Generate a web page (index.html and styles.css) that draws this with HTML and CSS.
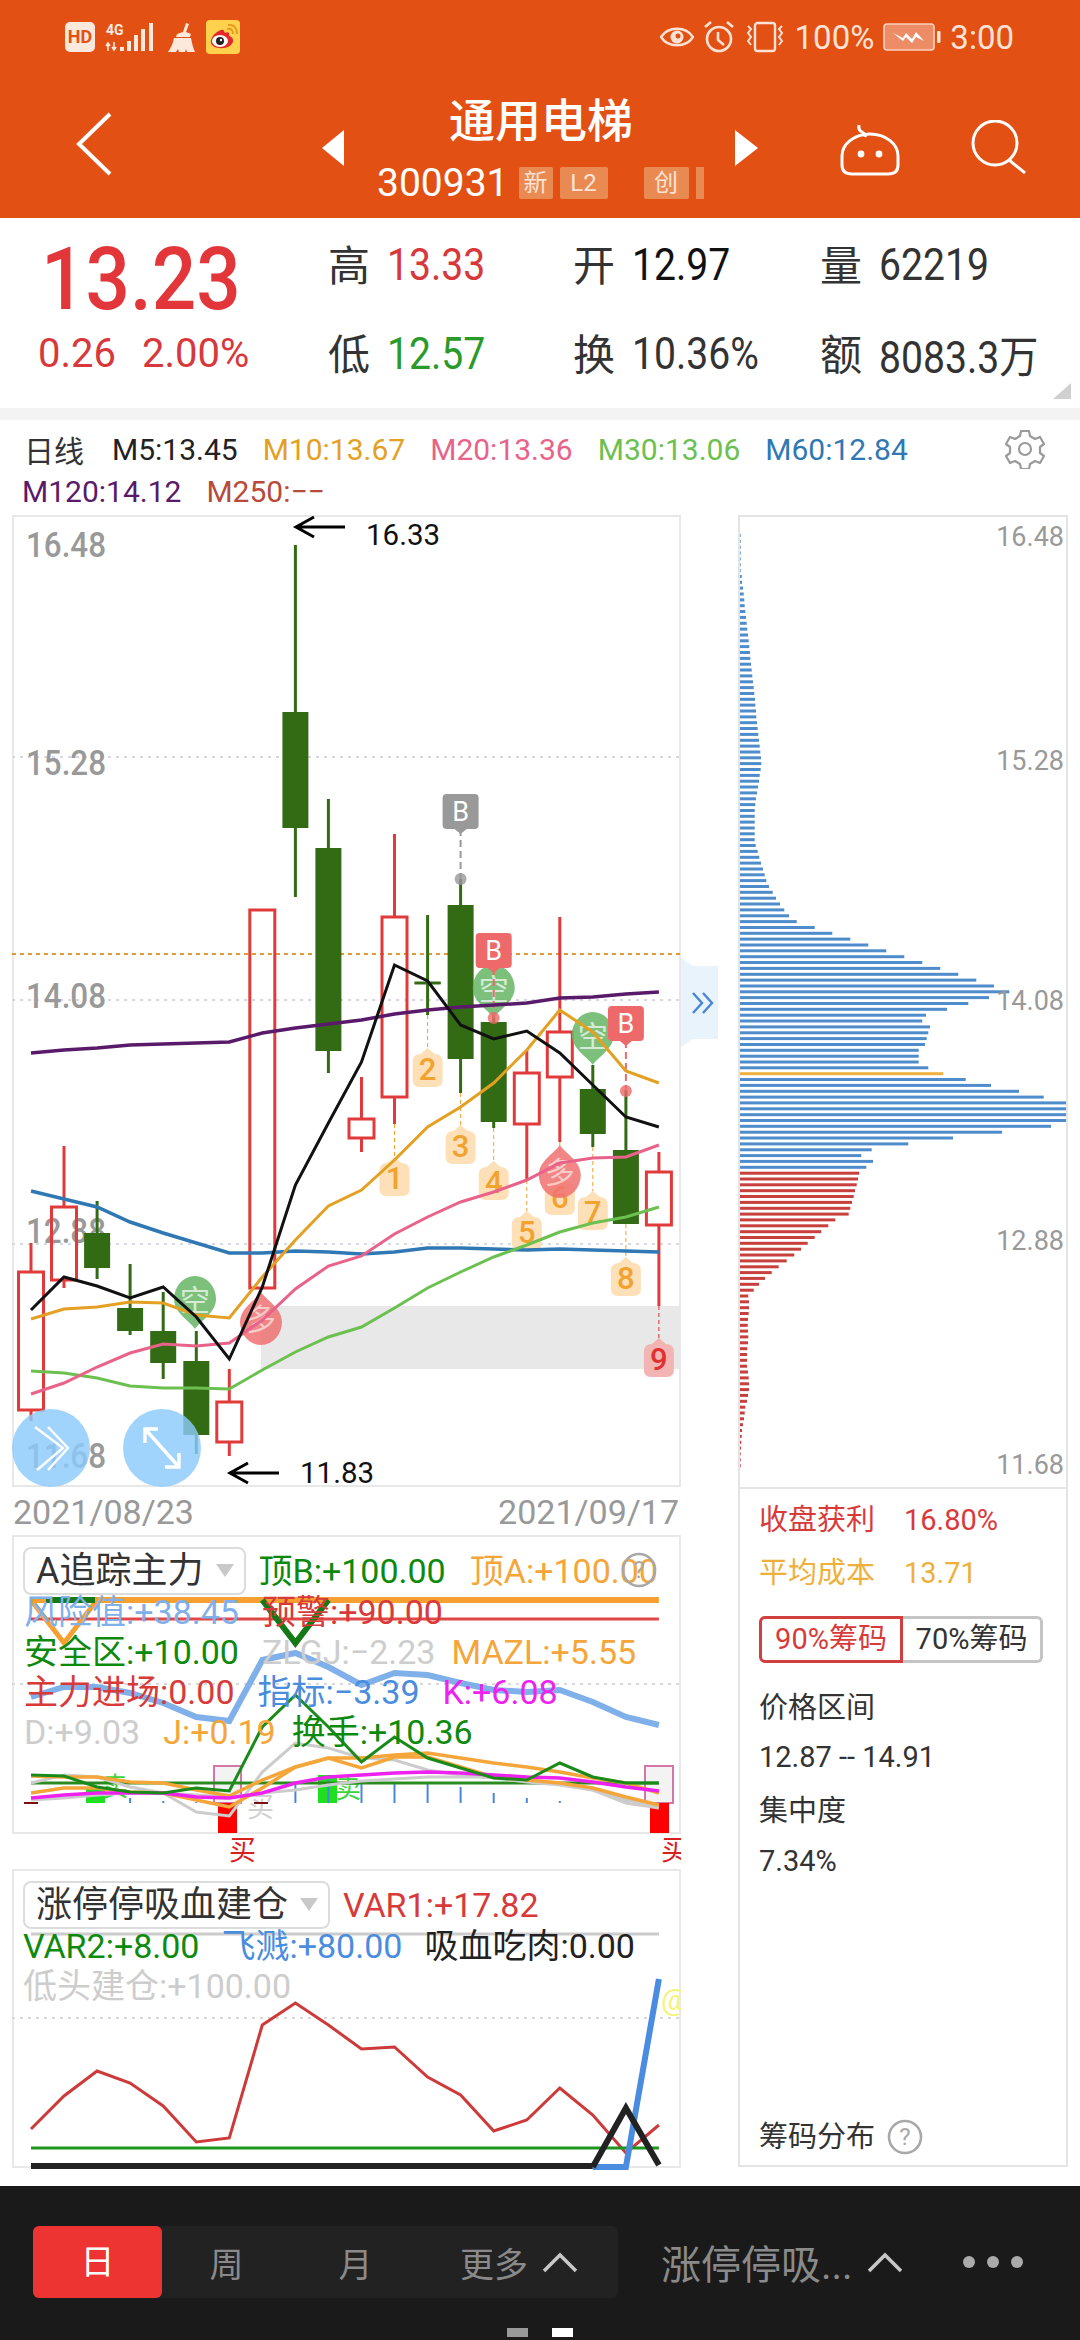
FILE: index.html
```html
<!DOCTYPE html>
<html lang="zh-CN">
<head>
    <meta charset="UTF-8">
    <meta name="viewport" content="width=device-width, initial-scale=1.0">
    <title>通用电梯</title>
    <link rel="stylesheet" href="styles.css">
</head>
<body>
    <header class="app-header">
        <div class="status-bar">
            <div class="status-left">
                <span class="hd-badge">HD</span>
                <svg class="signal-icon" viewBox="0 0 52 30" width="52" height="30">
                    <text x="1" y="13" class="net-label">4G</text>
                    <path d="M3 29v-7M1 24l2-3 2 3M9 20v7M7 25l2 3 2-3" fill="none" stroke="#fde8dc" stroke-width="1.6"/>
                    <rect x="15" y="25" width="4" height="4" fill="#fde8dc"/>
                    <rect x="22" y="19" width="4" height="10" fill="#fde8dc"/>
                    <rect x="29" y="13" width="4" height="16" fill="#fde8dc"/>
                    <rect x="36" y="7" width="4" height="22" fill="#fde8dc"/>
                    <rect x="44" y="1" width="4" height="28" fill="#fde8dc"/>
                </svg>
                <svg class="broom-icon" viewBox="0 0 29 30" width="29" height="30">
                    <path d="M19 1l3 1-3 8 5 2-1 3H9l1-3 6-2z" fill="#fde8dc"/>
                    <path d="M7 16h17c1 5 2 10 4 14h-8l-1-3-1 3h-6l-1-3-2 3H1c3-4 5-9 6-14z" fill="#fde8dc"/>
                </svg>
                <svg class="weibo-icon" viewBox="0 0 34 34" width="34" height="34">
                    <rect width="34" height="34" rx="4" fill="#ffd24e"/>
                    <path d="M15 10c-6 2-11 8-10 13 2 6 14 7 20 2 4-4 2-8-2-9 1-3-1-5-4-3-1-3-2-4-4-3z" fill="#e3282a"/>
                    <ellipse cx="14" cy="21" rx="8" ry="6" fill="#fff"/>
                    <circle cx="14" cy="21" r="4" fill="#222"/>
                    <circle cx="15" cy="20" r="1.2" fill="#fff"/>
                    <path d="M21 9c4-1 6 1 6 5M22 5c6-1 9 3 9 9" fill="none" stroke="#e8961e" stroke-width="1.8"/>
                </svg>
            </div>
            <div class="status-right">
                <svg viewBox="0 0 34 24" width="34" height="24">
                    <path d="M1 12C8 1 26 1 33 12 26 23 8 23 1 12z" fill="none" stroke="#fde3d5" stroke-width="2.4"/>
                    <circle cx="17" cy="12" r="6.5" fill="#fde3d5"/>
                    <circle cx="18" cy="11" r="2.5" fill="#e35014"/>
                </svg>
                <svg viewBox="0 0 32 34" width="32" height="34">
                    <circle cx="16" cy="19" r="12" fill="none" stroke="#fde3d5" stroke-width="2.6"/>
                    <path d="M15 12v8l6 5M2 7l6-5M30 7l-6-5" fill="none" stroke="#fde3d5" stroke-width="2.6"/>
                </svg>
                <svg viewBox="0 0 42 32" width="42" height="32">
                    <rect x="11" y="2" width="20" height="28" rx="2.5" fill="none" stroke="#fde3d5" stroke-width="2.4"/>
                    <path d="M4 5l3 3-3 4 3 4-3 4 3 4M38 5l-3 3 3 4-3 4 3 4-3 4" fill="none" stroke="#fde3d5" stroke-width="2"/>
                </svg>
                <span class="status-text">100%</span>
                <svg viewBox="0 0 58 28" width="58" height="28">
                    <rect x="1" y="1" width="50" height="26" rx="3" fill="#ec8d68" stroke="#fdd0ba" stroke-width="1.6"/>
                    <path d="M10 10l10 5 3-5 6 6 4-7 8 9-8-4-4 6-6-6-3 4z" fill="#fff"/>
                    <rect x="54" y="8" width="3.5" height="12" rx="1" fill="#fde3d5"/>
                </svg>
                <span class="status-text">3:00</span>
            </div>
        </div>
        <div class="title-bar">
            <svg class="back-icon" viewBox="0 0 36 64" width="36" height="64">
                <polyline points="34,2 3,32 34,62" fill="none" stroke="#fff" stroke-width="4"/>
            </svg>
            <span class="tri tri-left"></span>
            <div class="stock-name">
                <div class="stock-title">通用电梯</div>
                <div class="stock-code">
                    <span>300931</span>
                    <span class="code-tag tag-new">新</span>
                    <span class="code-tag tag-l2">L2</span>
                    <span class="code-tag tag-chuang">创</span>
                    <span class="tag-rest"></span>
                </div>
            </div>
            <span class="tri tri-right"></span>
            <svg class="robot-icon" viewBox="0 0 60 54" width="60" height="54">
                <path d="M2 34a28 22 0 0 1 56 0v9q0 9-10 9H12q-10 0-10-9z" fill="none" stroke="#fff" stroke-width="3"/>
                <path d="M19 3q-1 5 3 7t3 5" fill="none" stroke="#fff" stroke-width="3"/>
                <circle cx="21" cy="32" r="3.4" fill="#fff"/>
                <circle cx="39" cy="32" r="3.4" fill="#fff"/>
            </svg>
            <svg class="search-icon" viewBox="0 0 56 54" width="56" height="54">
                <circle cx="24" cy="23" r="22" fill="none" stroke="#fff" stroke-width="3"/>
                <line x1="38" y1="40" x2="54" y2="53" stroke="#fff" stroke-width="3"/>
            </svg>
        </div>
    </header>

    <section class="quote">
        <div class="price-block">
            <div class="price-now">13.23</div>
            <div class="price-change"><span>0.26</span><span>2.00%</span></div>
        </div>
        <div class="stats">
            <div class="stat"><span class="stat-key">高</span><span class="stat-val up">13.33</span></div>
            <div class="stat"><span class="stat-key">开</span><span class="stat-val ink">12.97</span></div>
            <div class="stat"><span class="stat-key">量</span><span class="stat-val">62219</span></div>
            <div class="stat"><span class="stat-key">低</span><span class="stat-val down">12.57</span></div>
            <div class="stat"><span class="stat-key">换</span><span class="stat-val">10.36%</span></div>
            <div class="stat"><span class="stat-key">额</span><span class="stat-val">8083.3万</span></div>
        </div>
    </section>

    <main class="content">
        <div class="ma-legend">
            <div class="ma-rows">
                <div class="ma-row ma-first">
                    <span class="ma-label">日线</span>
                    <span class="c-m5">M5:13.45</span>
                    <span class="c-m10">M10:13.67</span>
                    <span class="c-m20">M20:13.36</span>
                    <span class="c-m30">M30:13.06</span>
                    <span class="c-m60">M60:12.84</span>
                </div>
                <div class="ma-row">
                    <span class="c-m120">M120:14.12</span>
                    <span class="c-m250">M250:−−</span>
                </div>
            </div>
            <svg class="gear-icon" viewBox="0 0 40 40" width="40" height="40">
                <path d="M16 2h8l1 5 5 3 5-2 4 7-4 3v6l4 3-4 7-5-2-5 3-1 5h-8l-1-5-5-3-5 2-4-7 4-3v-6L1 15l4-7 5 2 5-3z" fill="none" stroke="#9a9a9a" stroke-width="2.2" stroke-linejoin="round"/>
                <circle cx="20" cy="20" r="6" fill="none" stroke="#9a9a9a" stroke-width="2.2"/>
            </svg>
        </div>

        <div class="charts-row">
            <div class="left-col">
                <div class="main-chart">
                    <svg id="kline" class="chart" viewBox="12 515 669 972" width="669" height="972"></svg>
                    <div class="expand-tab">
                        <svg viewBox="0 0 24 22" width="24" height="22">
                            <path d="M2 1l9 10-9 10M12 1l9 10-9 10" fill="none" stroke="#4a86d8" stroke-width="2.4"/>
                        </svg>
                    </div>
                </div>
                <div class="date-row"><span>2021/08/23</span><span>2021/09/17</span></div>

                <div class="sub-panel sub-a">
                    <svg id="sub-a" class="chart" viewBox="12 1535 669 334" width="669" height="334"></svg>
                    <div class="sub-legend">
                        <div class="sub-row first-row">
                            <div class="picker">A追踪主力<i class="picker-arrow"></i></div>
                            <span class="c-green">顶B:+100.00</span>
                            <span class="c-orange">顶A:+100.00</span>
                        </div>
                        <div class="sub-row">
                            <span class="c-sky">风险值:+38.45</span>
                            <span class="c-red">预警:+90.00</span>
                        </div>
                        <div class="sub-row">
                            <span class="c-green">安全区:+10.00</span>
                            <span class="c-gray">ZLGJ:−2.23</span>
                            <span class="c-orange pull-left">MAZL:+5.55</span>
                        </div>
                        <div class="sub-row">
                            <span class="c-red">主力进场:0.00</span>
                            <span class="c-blue">指标:−3.39</span>
                            <span class="c-magenta">K:+6.08</span>
                        </div>
                        <div class="sub-row">
                            <span class="c-gray">D:+9.03</span>
                            <span class="c-orange">J:+0.19</span>
                            <span class="c-green pull-left">换手:+10.36</span>
                        </div>
                    </div>
                    <svg class="help-over" viewBox="0 0 36 36" width="36" height="36">
                        <circle cx="18" cy="18" r="16" fill="none" stroke="#a8a8a8" stroke-width="2.6"/>
                        <text x="18" y="26" class="help-mark">?</text>
                    </svg>
                </div>

                <div class="sub-panel sub-b">
                    <svg id="sub-b" class="chart" viewBox="12 1869 669 302" width="669" height="302"></svg>
                    <div class="sub-legend">
                        <div class="sub-row first-row">
                            <div class="picker">涨停停吸血建仓<i class="picker-arrow"></i></div>
                            <span class="c-red">VAR1:+17.82</span>
                        </div>
                        <div class="sub-row">
                            <span class="c-green">VAR2:+8.00</span>
                            <span class="c-blue">飞溅:+80.00</span>
                            <span class="c-dark">吸血吃肉:0.00</span>
                        </div>
                        <div class="sub-row">
                            <span class="c-gray">低头建仓:+100.00</span>
                        </div>
                    </div>
                </div>
            </div>

            <aside class="right-col">
                <svg id="chips" class="chart chips-chart" viewBox="739 515 326 970" width="326" height="970"></svg>
                <div class="chips-info">
                    <div class="info-pair c-red"><span>收盘获利</span><span>16.80%</span></div>
                    <div class="info-pair info-avg c-amber"><span>平均成本</span><span>13.71</span></div>
                    <div class="chip-tabs">
                        <span class="chip-tab chip-on">90%筹码</span>
                        <span class="chip-tab">70%筹码</span>
                    </div>
                    <div class="info-line line-range">价格区间</div>
                    <div class="info-line line-range-val">12.87 -- 14.91</div>
                    <div class="info-line line-conc">集中度</div>
                    <div class="info-line line-conc-val">7.34%</div>
                    <div class="chips-foot">
                        <span>筹码分布</span>
                        <svg viewBox="0 0 36 36" width="36" height="36">
                            <circle cx="18" cy="18" r="16" fill="none" stroke="#a8a8a8" stroke-width="2.6"/>
                            <text x="18" y="26" class="help-mark">?</text>
                        </svg>
                    </div>
                </div>
            </aside>
        </div>
    </main>

    <footer class="bottom-bar">
        <div class="tab-row">
            <div class="period-tabs">
                <span class="period period-on">日</span>
                <span class="period period-week">周</span>
                <span class="period period-month">月</span>
                <span class="period period-more">更多
                    <svg viewBox="0 0 36 22" width="36" height="22"><polyline points="2,20 18,4 34,20" fill="none" stroke="#c8c8c8" stroke-width="3.5"/></svg>
                </span>
            </div>
            <span class="formula-tab">涨停停吸...
                <svg viewBox="0 0 36 22" width="36" height="22"><polyline points="2,20 18,4 34,20" fill="none" stroke="#c8c8c8" stroke-width="3.5"/></svg>
            </span>
            <span class="more-dots"><i></i><i></i><i></i></span>
        </div>
        <div class="pager"><i></i><i class="pager-on"></i></div>
    </footer>

    <script src="chart.js"></script>
</body>
</html>
```

FILE: styles.css
```css
* {
    box-sizing: border-box;
}
body {
    margin: 0;
    width: 1080px;
    height: 2340px;
    display: flex;
    flex-direction: column;
    overflow: hidden;
    background-color: #fff;
    color: #333;
    font-family: Roboto, "Noto Sans CJK SC", sans-serif;
}

/* header */
.app-header {
    height: 218px;
    flex: none;
    background-color: #e35014;
    color: #fff;
}
.status-bar {
    height: 72px;
    display: flex;
    justify-content: space-between;
    align-items: center;
    padding: 2px 66px 0 65px;
}
.status-left,
.status-right {
    display: flex;
    align-items: center;
}
.status-left {
    gap: 10px;
}
.status-right {
    gap: 9px;
}
.hd-badge {
    width: 30px;
    height: 30px;
    line-height: 30px;
    text-align: center;
    border-radius: 5px;
    background-color: #fde8dc;
    color: #e35014;
    font-size: 18px;
    font-weight: 700;
}
.net-label {
    font-size: 14px;
    font-weight: 700;
    fill: #fde8dc;
}
.status-text {
    font-size: 33px;
    color: #fde3d5;
}
.title-bar {
    height: 146px;
    display: flex;
    align-items: flex-start;
}
.back-icon {
    margin: 40px 0 0 76px;
}
.tri {
    width: 0;
    height: 0;
    margin-top: 58px;
    border-top: 18px solid transparent;
    border-bottom: 18px solid transparent;
}
.tri-left {
    margin-left: 210px;
    border-right: 22px solid #fff;
}
.tri-right {
    margin-left: 30px;
    border-left: 23px solid #fff;
}
.stock-name {
    width: 328px;
    margin-left: 33px;
}
.stock-title {
    height: 96px;
    line-height: 98px;
    text-align: center;
    font-size: 46px;
    font-weight: 500;
}
.stock-code {
    display: flex;
    align-items: center;
    height: 32px;
    font-size: 39px;
    margin-top: -1px;
    line-height: 32px;
}
.code-tag {
    height: 32px;
    line-height: 32px;
    margin-left: 7px;
    text-align: center;
    font-size: 24px;
    border-radius: 2px;
    background-color: #e98a52;
    color: #fde3d5;
}
.tag-new {
    width: 34px;
    margin-left: 10px;
}
.tag-l2 {
    width: 48px;
}
.tag-chuang {
    width: 45px;
    margin-left: 36px;
}
.tag-rest {
    width: 8px;
    height: 32px;
    margin-left: 7px;
    background-color: #e98a52;
}
.robot-icon {
    margin: 50px 0 0 82px;
}
.search-icon {
    margin: 48px 0 0 71px;
}

/* quote block */
.quote {
    height: 202px;
    flex: none;
    display: flex;
    position: relative;
    border-bottom: 12px solid #f3f3f3;
}
.quote::after {
    content: "";
    position: absolute;
    right: 9px;
    bottom: 9px;
    border-left: 18px solid transparent;
    border-bottom: 16px solid #d0d0d0;
}
.price-block {
    width: 328px;
    padding-left: 38px;
}
.price-now {
    width: 224px;
    height: 84px;
    margin: 19px 0 0 3px;
    line-height: 84px;
    font-size: 88px;
    font-weight: 500;
    color: #e2363a;
    transform: scaleX(0.89);
    transform-origin: left center;
}
.price-change {
    display: flex;
    gap: 26px;
    margin-top: 9px;
    height: 48px;
    line-height: 48px;
    font-size: 40px;
    color: #d8383c;
}
.stats {
    display: grid;
    grid-template-columns: 245px 247px auto;
    grid-auto-rows: 89px;
    padding-top: 2px;
}
.stat {
    display: flex;
    align-items: center;
    color: #333;
}
.stat-key {
    font-size: 42px;
    width: 59px;
    margin-top: -5px;
    color: #333;
}
.stat-val {
    display: inline-block;
    font-size: 44px;
    transform: scaleX(0.89);
    transform-origin: left center;
    white-space: nowrap;
}
.up {
    color: #d8383c;
}
.down {
    color: #2a9a2a;
}
.ink {
    color: #111;
}

/* moving average legend */
.content {
    flex: 1;
}
.ma-legend {
    height: 95px;
    padding: 8px 35px 0 22px;
    display: flex;
    justify-content: space-between;
    align-items: flex-start;
}
.ma-row {
    height: 42px;
    display: flex;
    align-items: center;
    gap: 25px;
    font-size: 30px;
}
.ma-first {
    padding-left: 2px;
}
.ma-label {
    color: #333;
    margin-right: 3px;
}
.gear-icon {
    margin-top: 1px;
}
.c-m5 { color: #222; }
.c-m10 { color: #e4a023; }
.c-m20 { color: #e8628a; }
.c-m30 { color: #6cc050; }
.c-m60 { color: #2f78b4; }
.c-m120 { color: #5a1a6a; }
.c-m250 { color: #b84a3a; }

/* charts */
.charts-row {
    display: flex;
    gap: 57px;
    padding-left: 12px;
}
.left-col {
    width: 669px;
}
.chart {
    display: block;
}
.chart text {
    font-family: Roboto, "Noto Sans CJK SC", sans-serif;
}
.main-chart {
    position: relative;
    height: 972px;
}
.expand-tab {
    position: absolute;
    left: 669px;
    top: 443px;
    width: 37px;
    height: 89px;
    display: flex;
    align-items: center;
    justify-content: center;
    padding-left: 6px;
    background-color: #e9f3fc;
    clip-path: polygon(0 0, 12px 8px, 100% 8px, 100% calc(100% - 8px), 12px calc(100% - 8px), 0 100%);
}
.date-row {
    height: 48px;
    display: flex;
    justify-content: space-between;
    align-items: center;
    padding: 2px 2px 0 1px;
    font-size: 34px;
    color: #999;
}
.sub-panel {
    position: relative;
}
.sub-a {
    height: 334px;
}
.sub-b {
    height: 302px;
}
.sub-legend {
    position: absolute;
    left: 0;
    top: 12px;
    font-size: 34px;
    line-height: 40px;
}
.sub-row {
    display: flex;
    gap: 23px;
    padding-left: 12px;
    white-space: nowrap;
}
.first-row {
    height: 45px;
    padding-left: 11px;
    gap: 13px;
    align-items: center;
    padding-top: 2px;
}
.sub-a .first-row span + span {
    margin-left: 11px;
}
.pull-left {
    margin-left: -7px;
}
.sub-b .sub-row {
    gap: 22px;
    padding-left: 11px;
}
.sub-b .first-row {
    gap: 13px;
}
.picker {
    height: 48px;
    flex: none;
    display: flex;
    align-items: center;
    padding: 0 10px 0 11px;
    background-color: #fff;
    border: 2px solid #dcdcdc;
    border-radius: 8px;
    font-size: 36px;
    color: #333;
}
.picker-arrow {
    margin: 0 0 0 12px;
    border-left: 9px solid transparent;
    border-right: 9px solid transparent;
    border-top: 13px solid #c8c8c8;
}
.help-over {
    position: absolute;
    left: 609px;
    top: 17px;
}
.help-mark {
    font-size: 24px;
    fill: #a8a8a8;
    text-anchor: middle;
}
.c-green { color: #0d8a0d; }
.c-orange { color: #f4a63a; }
.c-sky { color: #7fb0ea; }
.c-red { color: #d83a3a; }
.c-gray { color: #cdcdcd; }
.c-blue { color: #4a8cde; }
.c-magenta { color: #ee22ee; }
.c-dark { color: #222; }
.c-amber { color: #eeb03a; }

/* chips panel */
.right-col {
    width: 330px;
    height: 1652px;
    display: flex;
    flex-direction: column;
    border: 2px solid #e4e4e4;
}
.chips-chart {
    flex: none;
}
.chips-info {
    flex: 1;
    display: flex;
    flex-direction: column;
    padding: 11px 0 8px 19px;
    border-top: 2px solid #e4e4e4;
    font-size: 29px;
    line-height: 40px;
}
.info-pair {
    display: flex;
    gap: 29px;
}
.info-avg {
    margin-top: 13px;
}
.chip-tabs {
    display: flex;
    margin-top: 23px;
    height: 47px;
}
.chip-tab {
    width: 140px;
    text-align: center;
    line-height: 41px;
    border: 3px solid #c4c4c4;
    border-left: none;
    border-radius: 0 6px 6px 0;
    color: #333;
}
.chip-on {
    width: 144px;
    border: 3px solid #d23f3f;
    border-radius: 6px 0 0 6px;
    color: #d83a3a;
}
.line-range {
    margin-top: 25px;
}
.line-range-val {
    margin-top: 9px;
}
.line-conc {
    margin-top: 14px;
}
.line-conc-val {
    margin-top: 10px;
}
.chips-foot {
    margin-top: auto;
    display: flex;
    align-items: center;
    gap: 12px;
}

/* bottom bar */
.bottom-bar {
    height: 154px;
    flex: none;
    background-color: #1a1a1a;
    color: #8a8a8a;
}
.tab-row {
    display: flex;
    align-items: center;
    padding: 40px 0 0 33px;
}
.period-tabs {
    width: 585px;
    height: 72px;
    display: flex;
    align-items: center;
    background-color: #222;
    border-radius: 6px;
    font-size: 34px;
}
.period {
    text-align: center;
}
.period-on {
    width: 129px;
    height: 72px;
    line-height: 72px;
    border-radius: 6px;
    background-color: #ee3333;
    color: #fff;
}
.period-week {
    width: 129px;
}
.period-month {
    width: 129px;
}
.period-more {
    display: flex;
    align-items: center;
    gap: 14px;
    margin-left: 40px;
}
.formula-tab {
    display: flex;
    align-items: center;
    gap: 14px;
    margin-left: 43px;
    font-size: 40px;
    white-space: nowrap;
}
.more-dots {
    display: flex;
    gap: 12px;
    margin-left: 60px;
}
.more-dots i {
    width: 12px;
    height: 12px;
    border-radius: 50%;
    background-color: #aaa;
}
.pager {
    display: flex;
    justify-content: center;
    gap: 24px;
    margin-top: 30px;
}
.pager i {
    width: 21px;
    height: 9px;
    background-color: #999;
}
.pager .pager-on {
    background-color: #fff;
}
```

FILE: chart.js
```js
const X = i => +(31 + 33.05 * i).toFixed(1);
const RED = '#e03a3a';
const GREEN = '#336a14';

function poly(ys, color, w) {
    const pts = ys.map((y, i) => X(i) + ',' + y).join(' ');
    return `<polyline points="${pts}" fill="none" stroke="${color}" stroke-width="${w}"/>`;
}
function seg(x1, y1, x2, y2, color, w, dash) {
    const d = dash ? ` stroke-dasharray="${dash}"` : '';
    return `<line x1="${x1}" y1="${y1}" x2="${x2}" y2="${y2}" stroke="${color}" stroke-width="${w}"${d}/>`;
}

// top, bottom, wick top, wick bottom, r/g
const candles = [
    [1272, 1410, 1243, 1421, 'r'], [1207, 1280, 1146, 1288, 'r'], [1233, 1268, 1201, 1279, 'g'],
    [1308, 1331, 1264, 1335, 'g'], [1331, 1363, 1292, 1379, 'g'], [1361, 1435, 1331, 1454, 'g'],
    [1402, 1442, 1369, 1456, 'r'], [910, 1288, 910, 1288, 'r'], [712, 828, 545, 897, 'g'],
    [848, 1051, 799, 1073, 'g'], [1119, 1138, 1077, 1152, 'r'], [917, 1097, 834, 1124, 'r'],
    [982, 984, 915, 1015, 'g'], [905, 1059, 879, 1093, 'g'], [1022, 1122, 1012, 1128, 'g'],
    [1073, 1124, 1050, 1180, 'r'], [1032, 1077, 917, 1142, 'r'], [1089, 1134, 1065, 1147, 'g'],
    [1150, 1224, 1090, 1224, 'g'], [1172, 1225, 1152, 1306, 'r']
];

const m5 = [1310, 1277, 1286, 1298, 1287, 1317, 1359, 1287, 1185, 1123, 1062, 965, 981, 1025, 1039, 1031, 1053, 1085, 1117, 1127];
const m10 = [1319, 1309, 1307, 1302, 1303, 1315, 1318, 1277, 1240, 1206, 1190, 1160, 1127, 1107, 1083, 1050, 1010, 1032, 1071, 1083];
const m20 = [1394, 1383, 1367, 1353, 1344, 1346, 1343, 1320, 1289, 1266, 1256, 1234, 1217, 1202, 1192, 1180, 1163, 1158, 1157, 1145];
const m30 = [1371, 1373, 1378, 1386, 1388, 1388, 1389, 1370, 1352, 1337, 1327, 1308, 1288, 1272, 1257, 1245, 1232, 1223, 1217, 1207];
const m60 = [1191, 1199, 1207, 1222, 1233, 1243, 1253, 1253, 1251, 1252, 1254, 1252, 1248, 1248, 1249, 1250, 1249, 1250, 1251, 1252];
const m120 = [1053, 1050, 1048, 1045, 1044, 1043, 1042, 1033, 1028, 1024, 1020, 1014, 1010, 1007, 1005, 1003, 998, 997, 994, 992];

function drawCandle(c, i) {
    const [top, bot, wt, wb, kind] = c;
    const x = X(i);
    if (kind === 'r') {
        let s = `<rect x="${x - 12.5}" y="${top}" width="25" height="${bot - top}" fill="none" stroke="${RED}" stroke-width="3"/>`;
        if (wt < top) s += seg(x, wt, x, top, RED, 3);
        if (wb > bot) s += seg(x, bot, x, wb, RED, 3);
        return s;
    }
    return seg(x, wt, x, wb, GREEN, 3) +
        `<rect x="${x - 13}" y="${top}" width="26" height="${bot - top}" fill="${GREEN}"/>`;
}

// little number flag hanging under a candle
function numTag(i, top, label, from, pink) {
    const x = X(i), bot = top + 39;
    const bg = pink ? '#f3b4b4' : '#fde0b8';
    const fg = pink ? '#e03030' : '#f2a22e';
    return seg(x, from, x, top, fg, 1, '4 3') +
        `<path d="M${x} ${top}l7 6q8 0 8 8V${bot - 7}q0 7-7 7H${x - 8}q-7 0-7-7V${top + 14}q0-8 8-8z" fill="${bg}"/>` +
        `<text x="${x}" y="${top + 32}" class="num-tag" fill="${fg}" font-size="31" font-weight="500" text-anchor="middle">${label}</text>`;
}
function flagB(i, top, to, color) {
    const x = X(i), bot = top + 35;
    return seg(x, bot, x, to, color, 2, '7 4') +
        `<circle cx="${x}" cy="${to}" r="6" fill="${color}" opacity="0.8"/>` +
        `<path d="M${x - 18} ${top + 4}q0-4 4-4h28q4 0 4 4v${bot - top - 8}q0 4-4 4h-8l-6 5-6-5h-8q-4 0-4-4z" fill="${color}"/>` +
        `<text x="${x}" y="${top + 27}" fill="#fff" font-size="27" text-anchor="middle">B</text>`;
}
// pin: 空 points down, 多 points up
function pin(cx, cy, label, up) {
    const color = up ? '#f07272' : '#66b666';
    const ink = up ? '#f8c4c4' : '#cfe8cf';
    const flip = up ? ' scale(1,-1)' : '';
    return `<g opacity="0.85"><path transform="translate(${cx} ${cy})${flip}" d="M0 28C-5 20-21 12-21-2A21 23 0 1 1 21-2C21 12 5 20 0 28z" fill="${color}"/>` +
        `<text x="${cx}" y="${cy + 10}" fill="${ink}" font-size="30" text-anchor="middle">${label}</text></g>`;
}
function axisLabel(y, t) {
    return `<text x="26" y="${y}" fill="#999" font-size="35" font-weight="500" textLength="80" lengthAdjust="spacingAndGlyphs">${t}</text>`;
}
function arrowNote(x, y, baseline, t) {
    return `<path d="M${x + 51} ${y}H${x + 2}M${x + 20} ${y - 10}L${x + 2} ${y}L${x + 20} ${y + 10}" fill="none" stroke="#000" stroke-width="3"/>` +
        `<text x="${x + 72}" y="${baseline}" fill="#111" font-size="29.5">${t}</text>`;
}

// main k-line
const k = [];
k.push('<rect x="13" y="516" width="667" height="970" fill="#fff" stroke="#e8e8e8" stroke-width="2"/>');
k.push(seg(12, 757, 681, 757, '#d8d8e4', 2, '3 5'));
k.push(seg(12, 1000, 681, 1000, '#d8d8e4', 2, '3 5'));
k.push(seg(12, 1244, 681, 1244, '#d8d8e4', 2, '3 5'));
k.push('<rect x="261" y="1306" width="420" height="63" fill="#e8e8e8"/>');
k.push(axisLabel(557, '16.48'), axisLabel(775, '15.28'), axisLabel(1008, '14.08'), axisLabel(1243, '12.88'), axisLabel(1468, '11.68'));
k.push(seg(12, 954, 681, 954, '#e09a3a', 2, '4 4'));
candles.forEach((c, i) => k.push(drawCandle(c, i)));
k.push(seg(X(12) - 13, 983, X(12) + 13, 983, GREEN, 3));
k.push(numTag(16, 1176, '6', 1142));
k.push(numTag(11, 1157, '1', 1124), numTag(12, 1048, '2', 1015), numTag(13, 1125, '3', 1093));
k.push(numTag(14, 1161, '4', 1128), numTag(15, 1211, '5', 1180), numTag(17, 1191, '7', 1147));
k.push(numTag(18, 1257, '8', 1224), numTag(19, 1338, '9', 1306, true));
k.push(pin(195, 1301, '空'), pin(X(14), 990, '空'), pin(X(17), 1037, '空'));
k.push(pin(261, 1320, '多', true), pin(X(16), 1173, '多', true));
k.push(flagB(13, 794, 879, '#999'), flagB(14, 933, 1018, '#ee6a6a'), flagB(18, 1006, 1091, '#ee6a6a'));
k.push(poly(m120, '#5a1a6a', 3.5), poly(m60, '#2f78b4', 3.5), poly(m30, '#6cc050', 3));
k.push(poly(m20, '#e8628a', 3), poly(m10, '#e4a023', 3), poly(m5, '#111', 3));
k.push(arrowNote(294, 527, 545, '16.33'), arrowNote(228, 1473, 1483, '11.83'));
k.push('<circle cx="51" cy="1448" r="39" fill="#8ccbfb" opacity="0.82"/><circle cx="162" cy="1448" r="39" fill="#8ccbfb" opacity="0.82"/>');
k.push('<path d="M35 1427l28 21-26 22M48 1427l20 21-20 22" fill="none" stroke="#fff" stroke-width="2.4"/>');
k.push('<path d="M146 1430l32 36M145 1443v-14h13M179 1453v14h-14" fill="none" stroke="#fff" stroke-width="3.4"/>');
document.getElementById('kline').innerHTML = k.join('');

// A追踪主力
const flat = v => Array(20).fill(v);
const a = [];
a.push('<rect x="13" y="1536" width="667" height="297" fill="#fff" stroke="#e8e8e8" stroke-width="2"/>');
a.push(seg(12, 1684, 681, 1684, '#d8d8d8', 2, '3 5'));
a.push(poly(flat(1619), '#e04848', 3));
a.push(poly(flat(1600), '#f5a030', 6));
a.push(`<polyline points="${X(0)},1600 ${X(1)},1643 ${X(2)},1600" fill="none" stroke="#f5a030" stroke-width="5"/>`);
a.push(seg(46, 1600, 95, 1600, '#157a15', 6));
a.push(`<polyline points="${X(7)},1600 ${X(8)},1643 ${X(9)},1600" fill="none" stroke="#157a15" stroke-width="6"/>`);
a.push(poly([1697, 1687, 1687, 1693, 1703, 1717, 1721, 1660, 1653, 1667, 1685, 1673, 1675, 1683, 1690, 1692, 1690, 1702, 1717, 1725], '#7fb0ea', 6));
a.push('<rect x="214" y="1766" width="27" height="37" fill="#f3f3f3" stroke="#d476a6" stroke-width="2"/>');
a.push('<rect x="645" y="1766" width="28" height="37" fill="#f3f3f3" stroke="#d476a6" stroke-width="2"/>');
a.push('<rect x="86" y="1787" width="19" height="16" fill="#1ee01e"/><rect x="318" y="1775" width="19" height="28" fill="#1ee01e"/>');
a.push('<text x="102" y="1796" fill="#3ad43a" font-size="26">卖</text><text x="335" y="1798" fill="#3ad43a" font-size="26">卖</text>');
a.push('<rect x="218" y="1803" width="19" height="30" fill="#f00"/><rect x="650" y="1803" width="19" height="30" fill="#f00"/>');
a.push('<text x="247" y="1817" fill="#d0d0d0" font-size="27">买</text>');
[[3, 1798], [4, 1801], [5, 1802], [8, 1783], [9, 1780], [10, 1780], [11, 1782], [12, 1782], [13, 1787], [14, 1793], [15, 1798], [16, 1801], [18, 1801]].forEach(t => {
    a.push(seg(X(t[0]), t[1], X(t[0]), 1803, '#4a86d8', 2));
});
a.push(seg(24, 1803, 38, 1803, '#7a1010', 2), seg(254, 1803, 268, 1803, '#7a1010', 2));
a.push(poly(flat(1783), '#2a8a20', 3));
a.push(poly([1783, 1775, 1777, 1787, 1793, 1812, 1816, 1772, 1743, 1748, 1758, 1760, 1770, 1775, 1778, 1782, 1785, 1790, 1800, 1806], '#cccccc', 3));
a.push(poly([1800, 1798, 1795, 1793, 1793, 1795, 1797, 1793, 1790, 1785, 1781, 1779, 1777, 1777, 1777, 1780, 1783, 1790, 1803, 1808], '#cccccc', 3));
a.push(poly([1776, 1777, 1777, 1782, 1783, 1790, 1796, 1780, 1767, 1758, 1758, 1755, 1753, 1758, 1763, 1767, 1772, 1778, 1783, 1793], '#f4a63a', 3.5));
a.push(poly([1793, 1788, 1788, 1792, 1793, 1800, 1807, 1788, 1767, 1758, 1768, 1757, 1757, 1767, 1777, 1780, 1783, 1788, 1797, 1805], '#f4a63a', 3.5));
a.push(poly([1798, 1795, 1793, 1793, 1793, 1797, 1798, 1793, 1783, 1777, 1775, 1773, 1772, 1773, 1775, 1777, 1778, 1782, 1787, 1791], '#ee22ee', 3.5));
a.push(poly([1775, 1776, 1787, 1792, 1793, 1788, 1791, 1727, 1695, 1727, 1762, 1737, 1758, 1768, 1778, 1780, 1763, 1777, 1783, 1783], '#1a8a1a', 3));
a.push('<text x="229" y="1860" fill="#d82020" font-size="27">买</text><text x="661" y="1860" fill="#d82020" font-size="27">买</text>');
document.getElementById('sub-a').innerHTML = a.join('');

// 涨停停吸血建仓
const b = [];
b.push('<rect x="13" y="1870" width="667" height="297" fill="#fff" stroke="#e8e8e8" stroke-width="2"/>');
b.push(seg(31, 1934, 659, 1934, '#cccccc', 3));
b.push(seg(12, 2018, 681, 2018, '#d8d8d8', 2, '3 5'));
b.push('<text x="661" y="2010" fill="#f4f47a" font-size="30">@</text>');
b.push(poly([2129, 2096, 2071, 2083, 2106, 2142, 2138, 2025, 2003, 2025, 2049, 2047, 2077, 2095, 2131, 2120, 2088, 2115, 2153, 2125], '#cc3a3a', 3));
b.push(poly(flat(2148), '#1f961f', 3));
b.push(seg(31, 2166, X(17), 2166, '#222', 6));
b.push(`<polyline points="${X(17)},2167 ${X(18)},2167 ${X(19)},1979" fill="none" stroke="#4a8ce0" stroke-width="6"/>`);
b.push(`<polyline points="${X(17)},2167 ${X(18)},2108 ${X(19)},2165" fill="none" stroke="#222" stroke-width="6"/>`);
document.getElementById('sub-b').innerHTML = b.join('');

// chip distribution, bar lengths from top to bottom
const blue = [2, 2, 2, 2, 2, 2, 2, 5, 6, 9, 11, 13, 14, 16, 18, 20, 22, 24, 26, 28, 30, 31, 33, 35, 37, 39, 41, 43, 45, 46, 48, 49, 51, 53, 55, 57, 59, 61, 63, 64, 62, 59, 57, 54, 51, 48, 46, 44, 44, 44, 44, 44, 44, 47, 53, 58, 63, 69, 74, 79, 87, 98, 108, 120, 133, 147, 170, 224, 277, 331, 385, 439, 493, 547, 601, 655, 709, 762, 808, 747, 685, 621, 558, 547, 570, 565, 560, 555, 536, 536, 536, 565];
const amber = [610];
const blue2 = [677, 753, 837, 911, 985, 984, 983, 982, 933, 786, 639, 505, 395, 364, 399, 379];
const redBars = [358, 354, 350, 345, 341, 336, 331, 326, 286, 265, 244, 224, 203, 183, 163, 140, 116, 95, 75, 57, 41, 25, 27, 27, 26, 24, 23, 24, 25, 24, 22, 21, 21, 21, 24, 26, 27, 27, 24, 21, 16, 14, 12, 9, 6, 5, 4, 3, 2, 2, 2];
const chips = [];
let row = 0;
function addBars(list, color) {
    list.forEach(w => {
        const y = (532 + row * 5.85).toFixed(1);
        chips.push(`<rect x="739" y="${y}" width="${(w / 3).toFixed(1)}" height="3" fill="${color}"/>`);
        row++;
    });
}
addBars(blue, '#4f8ccb');
addBars(amber, '#f0b040');
addBars(blue2, '#4f8ccb');
addBars(redBars, '#c8403e');
[[544, '16.48'], [768, '15.28'], [1008, '14.08'], [1248, '12.88'], [1472, '11.68']].forEach(l => {
    chips.push(`<text x="1063" y="${l[0]}" fill="#999" font-size="27" text-anchor="end">${l[1]}</text>`);
});
document.getElementById('chips').innerHTML = chips.join('');
```
